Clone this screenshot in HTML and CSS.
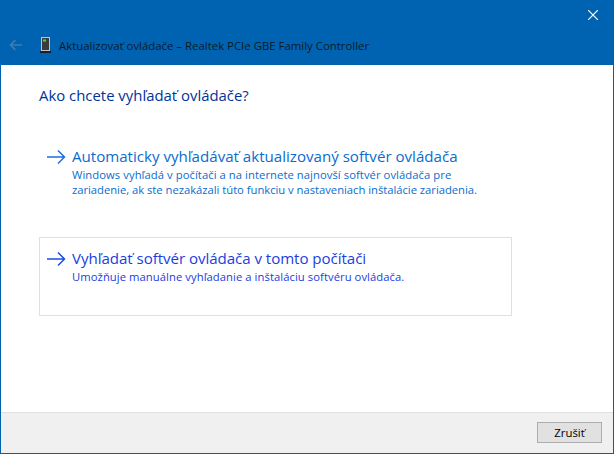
FILE: index.html
```html
<!DOCTYPE html>
<html lang="sk">
<head>
<meta charset="utf-8">
<title>Aktualizovať ovládače</title>
<link rel="stylesheet" href="styles.css">
</head>
<body>
<div class="window">
  <header class="chrome">
    <div class="caption">
      <svg class="close" width="10" height="10" viewBox="0 0 10 10"><path d="M0 0L10 10M10 0L0 10" stroke="#fff" stroke-width="1.2" fill="none"/></svg>
    </div>
    <div class="nav">
      <svg class="back" width="13" height="12" viewBox="0 0 13 12"><path d="M13 6H1.500M6.500 1L1.500 6L6.500 11" stroke="#3f7bb0" stroke-width="1.700" fill="none"/></svg>
      <svg class="device" width="12" height="16" viewBox="0 0 12 16"><rect x="1" y="0" width="9" height="14" fill="#c4c4c4"/><rect x="2" y="1" width="7" height="12" fill="#3c3c3c"/><rect x="3" y="2.500" width="3" height="2" fill="#3be04a"/><rect x="0" y="14" width="11" height="2" fill="#16212c"/></svg>
      <span class="title">Aktualizovať ovládače – Realtek PCIe GBE Family Controller</span>
    </div>
  </header>
  <main class="content">
    <h1 class="question">Ako chcete vyhľadať ovládače?</h1>
    <a class="option option-first">
      <svg class="arrow" width="19" height="14" viewBox="0 0 19 14"><path d="M0 7H17.500M11 .5L17.500 7L11 13.500" stroke="#1e6fe0" stroke-width="1.500" fill="none"/></svg>
      <div class="option-text">
        <div class="option-title">Automaticky vyhľadávať aktualizovaný softvér ovládača</div>
        <div class="option-desc"><span class="wider">Windows vyhľadá v počítači a na internete najnovší softvér ovládača pre</span><br><span class="narrower">zariadenie, ak ste nezakázali túto funkciu v nastaveniach inštalácie zariadenia.</span></div>
      </div>
    </a>
    <a class="option option-hover">
      <svg class="arrow" width="19" height="14" viewBox="0 0 19 14"><path d="M0 7H17.500M11 .5L17.500 7L11 13.500" stroke="#1a4fe6" stroke-width="1.500" fill="none"/></svg>
      <div class="option-text">
        <div class="option-title hot tight">Vyhľadať softvér ovládača v tomto počítači</div>
        <div class="option-desc hot wider">Umožňuje manuálne vyhľadanie a inštaláciu softvéru ovládača.</div>
      </div>
    </a>
  </main>
  <footer class="footer">
    <button class="cancel">Zrušiť</button>
  </footer>
</div>
</body>
</html>
```

FILE: styles.css
```css
* { box-sizing: border-box; }
html, body { margin: 0; padding: 0; }
body {
  width: 614px;
  height: 454px;
  overflow: hidden;
  font-family: "Open Sans", "Noto Sans", sans-serif;
  background: #fff;
}
.window {
  width: 614px;
  height: 454px;
  display: flex;
  flex-direction: column;
  border: 1px solid #0063b1;
  border-top: 0;
}
.chrome {
  height: 65px;
  background: #0063b1;
  margin: 0 -1px;
  display: flex;
  flex-direction: column;
}
.caption {
  height: 30px;
  display: flex;
  justify-content: flex-end;
  align-items: center;
  padding-right: 16px;
}
.close { display: block; }
.nav {
  height: 30px;
  display: flex;
  align-items: center;
  padding-left: 9px;
}
.back { margin-right: 18px; }
.device { margin-right: 7px; }
.title {
  font-size: 11.400px;
  color: #0b1a2b;
  white-space: nowrap;
}
.content {
  flex: 1;
  padding: 20px 101px 0 38px;
  display: flex;
  flex-direction: column;
}
.question {
  margin: 0;
  font-size: 14.900px;
  line-height: 20px;
  font-weight: 400;
  color: #003399;
}
.option {
  display: flex;
  width: 473px;
  border: 1px solid transparent;
  padding: 10px 7px 0;
}
.option-first { height: 79px; margin-top: 30px; }
.option-hover { height: 79px; margin-top: 23px; border-color: #e0e0e0; }
.arrow { margin-top: 4px; margin-right: 6px; flex: none; }
.option-title {
  font-size: 15.100px;
  line-height: 20px;
  color: #0a6cce;
  white-space: nowrap;
}
.option-desc {
  font-size: 11.250px;
  line-height: 15px;
  color: #0a6cce;
  margin-top: 1px;
  white-space: nowrap;
}
.hot { color: #1a3de0; }
.wider { letter-spacing: 0.06px; }
.narrower { letter-spacing: -0.025px; }
.tight { letter-spacing: -0.05px; }
.footer {
  height: 41px;
  background: #f0f0f0;
  border-top: 1px solid #dfdfdf;
  display: flex;
  justify-content: flex-end;
  align-items: flex-start;
  padding: 9px 11px 0 0;
}
.cancel {
  width: 65px;
  height: 21px;
  background: #e1e1e1;
  border: 1px solid #adadad;
  font-family: inherit;
  font-size: 11.400px;
  color: #000;
  padding: 0;
}
```
